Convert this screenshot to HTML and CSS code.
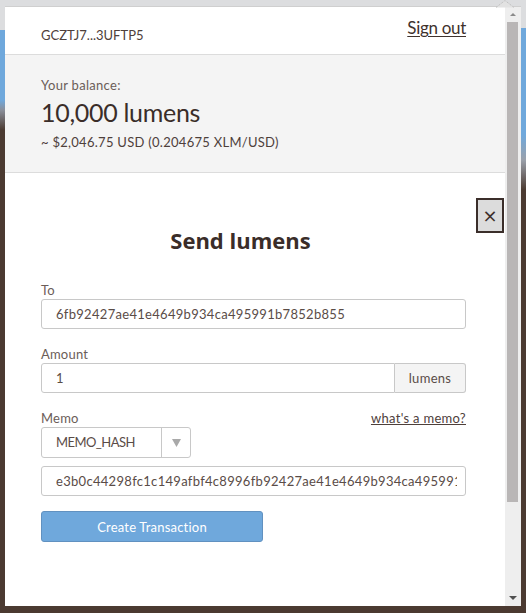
FILE: index.html
```html
<!DOCTYPE html>
<html lang="en">
<head>
<meta charset="utf-8">
<title>Send lumens</title>
<link rel="stylesheet" href="styles.css">
</head>
<body>
<svg class="notch" width="20" height="8" viewBox="0 0 20 8"><path d="M1 7.5 L10 0.5 L19 7.5" fill="#e2e2e2" stroke="#b8b8b8" stroke-width="1" stroke-dasharray="1 1"/></svg>
<div class="popup">
  <div class="content">
    <header class="top">
      <span class="account">GCZTJ7...3UFTP5</span>
      <a class="signout" href="#">Sign out</a>
    </header>
    <section class="balance">
      <div class="balance-label">Your balance:</div>
      <div class="balance-amount">10,000 lumens</div>
      <div class="balance-usd">~ $2,046.75 USD (0.204675 XLM/USD)</div>
    </section>
    <section class="send">
      <div class="title-row">
        <h1 class="title">Send lumens</h1>
        <button class="close" type="button">×</button>
      </div>
      <div class="form">
        <div class="field">
          <label class="label">To</label>
          <input class="input" type="text" value="6fb92427ae41e4649b934ca495991b7852b855">
        </div>
        <div class="field">
          <label class="label">Amount</label>
          <div class="group">
            <input class="input group-input" type="text" value="1">
            <span class="addon">lumens</span>
          </div>
        </div>
        <div class="field">
          <div class="label-row">
            <label class="label">Memo</label>
            <a class="memo-help" href="#">what's a memo?</a>
          </div>
          <div class="select">
            <span class="select-value">MEMO_HASH</span>
            <span class="select-arrow"><svg width="9" height="8" viewBox="0 0 9 8"><path d="M0 0 H9 L4.5 8 Z" fill="#a9a9a9"/></svg></span>
          </div>
          <input class="input memo-input" type="text" value="e3b0c44298fc1c149afbf4c8996fb92427ae41e4649b934ca495991b7852b855">
        </div>
        <button class="submit" type="button">Create Transaction</button>
      </div>
    </section>
  </div>
  <div class="scrollbar">
    <span class="sb-up"></span>
    <span class="sb-thumb"></span>
    <span class="sb-track"></span>
    <span class="sb-down"></span>
  </div>
</div>
</body>
</html>
```
FILE: styles.css
```css
html, body {
  margin: 0;
  padding: 0;
}
body {
  width: 526px;
  height: 613px;
  overflow: hidden;
  box-sizing: border-box;
  padding: 6px 5px 7px 5px;
  position: relative;
  font-family: Lato, "Open Sans", sans-serif;
  color: #3f322d;
  background:
    linear-gradient(to bottom, #dcdddf 0 30px, #6fa8dc 30px 100px, #8a8f9a 110px, #4b3a31 130px) left top / 5px 100% no-repeat,
    linear-gradient(to bottom, #dcdddf 0 28px, #6fa8dc 28px 135px, #9aa0aa 160px, #4b3a31 190px) right top / 5px 100% no-repeat,
    linear-gradient(#dcdddf, #dcdddf) left top / 100% 6px no-repeat,
    #4b3a31;
}
.notch {
  position: absolute;
  left: 495px;
  top: 0;
}
.popup {
  display: flex;
  width: 516px;
  height: 600px;
  background: #fff;
  box-sizing: border-box;
  border-top: 1px solid #cfcfcf;
}
.content {
  width: 500px;
  display: flex;
  flex-direction: column;
}
.top {
  display: flex;
  justify-content: space-between;
  align-items: flex-start;
  height: 48px;
  box-sizing: border-box;
  padding: 0 39px 0 36px;
  border-bottom: 1px solid #dcdcdc;
}
.account {
  font-size: 13px;
  line-height: 16px;
  margin-top: 20px;
  color: #4e403b;
}
.signout {
  font-size: 17px;
  line-height: 20px;
  margin-top: 11px;
  color: #3f322d;
  letter-spacing: -0.3px;
  text-decoration: underline;
  text-underline-offset: 2px;
}
.balance {
  background: #f4f4f4;
  padding: 22px 39px 0 36px;
  height: 118px;
  box-sizing: border-box;
  border-bottom: 1px solid #dcdcdc;
}
.balance-label {
  font-size: 13px;
  line-height: 16px;
  color: #6b5d58;
  letter-spacing: 0.3px;
}
.balance-amount {
  font-size: 25px;
  line-height: 30px;
  margin-top: 4px;
  color: #3a2d29;
  letter-spacing: -0.3px;
}
.balance-usd {
  font-size: 13px;
  line-height: 16px;
  margin-top: 7px;
  color: #4e403b;
  letter-spacing: 0.28px;
}
.send {
  padding: 25px 0 0 0;
}
.title-row {
  display: flex;
  align-items: flex-start;
}
.title {
  flex: 1;
  margin: 28px 0 0 0;
  font-family: "Open Sans", Lato, sans-serif;
  font-size: 22px;
  line-height: 28px;
  font-weight: 700;
  text-align: center;
  color: #3a2d29;
}
.close {
  width: 28px;
  height: 35px;
  margin-right: 1px;
  box-sizing: border-box;
  border: 2px solid #3b2e2a;
  background: #dcdcdc;
  padding: 0;
  font-family: "DejaVu Sans", sans-serif;
  font-size: 18px;
  line-height: 28px;
  color: #3b2e2a;
}
.form {
  padding: 28px 39px 0 36px;
}
.field {
  margin-bottom: 17px;
}
.label {
  display: block;
  font-size: 13px;
  line-height: 16px;
  color: #6b5d58;
  margin-bottom: 1px;
  letter-spacing: 0.2px;
}
.label-row {
  display: flex;
  justify-content: space-between;
  align-items: flex-start;
}
.memo-help {
  font-size: 13px;
  line-height: 16px;
  color: #4e403b;
  text-decoration: underline;
  letter-spacing: 0.3px;
}
.input {
  display: block;
  width: 100%;
  height: 30px;
  box-sizing: border-box;
  border: 1px solid #c8c8c8;
  border-radius: 3px;
  padding: 0 8px 0 14px;
  font-family: Lato, "Open Sans", sans-serif;
  font-size: 13px;
  letter-spacing: 0.3px;
  color: #5a4c47;
  background: #fff;
  outline: none;
}
.group {
  display: flex;
}
.group-input {
  flex: 1;
  width: auto;
  border-radius: 3px 0 0 3px;
}
.addon {
  width: 71px;
  height: 30px;
  box-sizing: border-box;
  border: 1px solid #c8c8c8;
  border-left: none;
  border-radius: 0 3px 3px 0;
  background: #f4f4f4;
  font-size: 13px;
  line-height: 28px;
  text-align: center;
  color: #5a4c47;
  letter-spacing: 0.3px;
}
.select {
  display: flex;
  width: 150px;
  height: 31px;
  box-sizing: border-box;
  border: 1px solid #c8c8c8;
  border-radius: 3px;
}
.select-value {
  flex: 1;
  padding-left: 14px;
  font-size: 13px;
  line-height: 29px;
  letter-spacing: -0.55px;
  color: #5a4c47;
}
.select-arrow {
  width: 28px;
  border-left: 1px solid #c8c8c8;
  display: flex;
  align-items: center;
  justify-content: center;
}
.memo-input {
  margin-top: 8px;
}
.submit {
  display: block;
  width: 222px;
  height: 31px;
  margin-top: -2px;
  border: 1px solid #6191c0;
  border-radius: 3px;
  background: #6fa8dc;
  color: #fff;
  font-family: Lato, "Open Sans", sans-serif;
  font-size: 13px;
  letter-spacing: 0.2px;
}
.scrollbar {
  width: 16px;
  display: flex;
  flex-direction: column;
  background: #eeeeee;
}
.sb-up {
  height: 15px;
  position: relative;
}
.sb-up::after {
  content: "";
  position: absolute;
  left: 5px;
  top: 6px;
  border-left: 3px solid transparent;
  border-right: 3px solid transparent;
  border-bottom: 3px solid #8a8a8a;
}
.sb-thumb {
  height: 480px;
  width: 11px;
  margin-left: 2px;
  background: #b9b6b6;
}
.sb-track {
  flex: 1;
}
.sb-down {
  height: 16px;
  position: relative;
}
.sb-down::after {
  content: "";
  position: absolute;
  left: 4px;
  top: 6px;
  border-left: 4px solid transparent;
  border-right: 4px solid transparent;
  border-top: 4px solid #505050;
}
```
